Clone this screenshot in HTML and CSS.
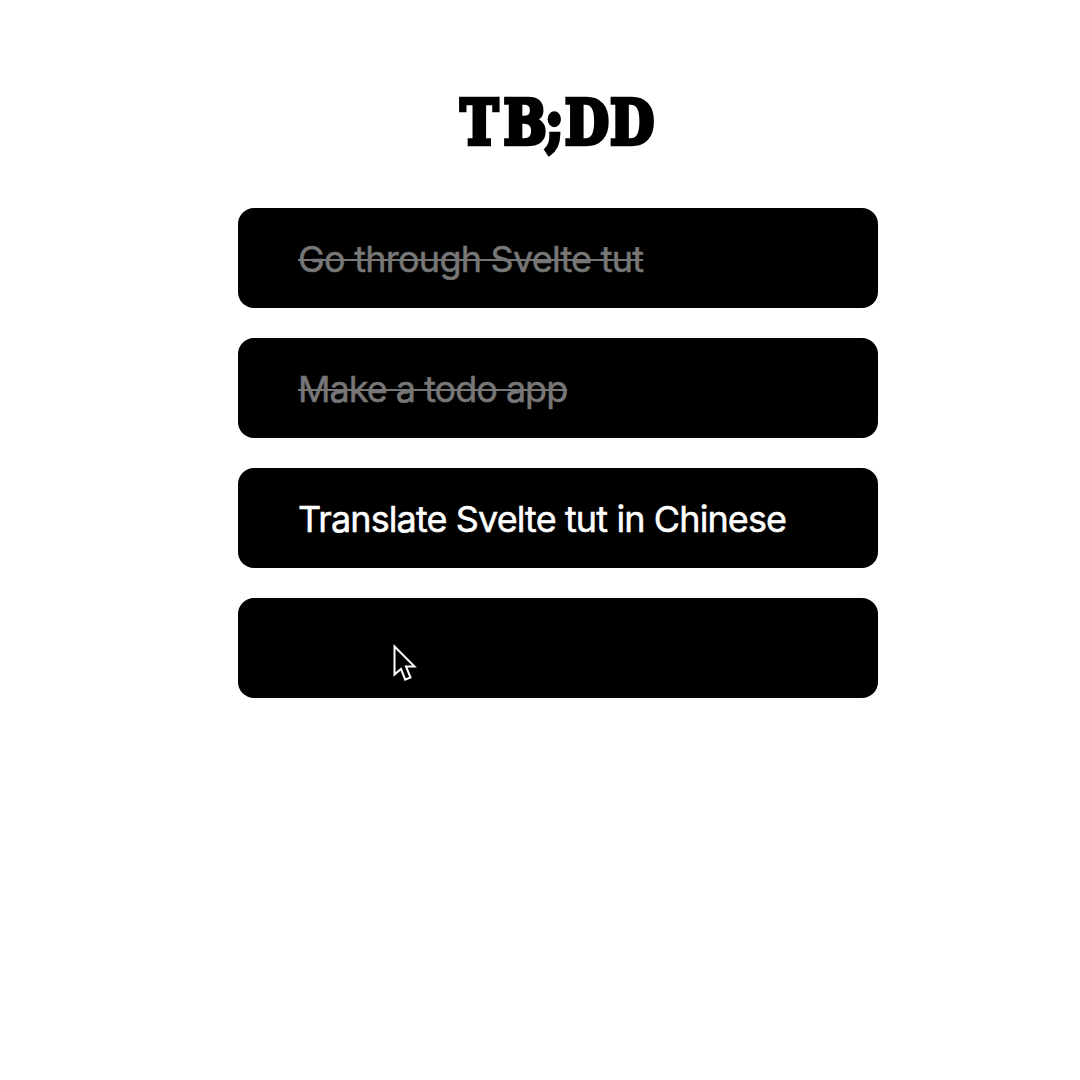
FILE: index.html
```html
<!DOCTYPE html>
<html lang="en">
<head>
<meta charset="utf-8">
<title>TB;DD</title>
<link rel="stylesheet" href="styles.css">
</head>
<body>
<main class="app">
  <h1 class="title"><span class="kern-wide">T</span><span class="kern-tight">B</span>;DD</h1>
  <ul class="todos">
    <li class="todo done"><span class="label">Go through Svelte tut</span></li>
    <li class="todo done make"><span class="label">Make a todo app</span></li>
    <li class="todo next"><span class="label">Translate Svelte tut in Chinese</span></li>
    <li class="todo"></li>
  </ul>
</main>
<svg class="cursor" width="30" height="42" viewBox="0 0 30 42"><path d="M4.5 2.5V30.5L11 25L15.2 35.7L20.5 33.5L16 22.5H24.5Z"/></svg>
</body>
</html>
```
FILE: styles.css
```css
* { box-sizing: border-box; }
body {
  margin: 0;
  min-height: 1080px;
  background: #fff;
  font-family: Inter, "Liberation Sans", sans-serif;
}
.app {
  width: 640px;
  margin-left: 238px;
  padding-top: 82px;
}
.title {
  margin: 0 0 46px;
  height: 80px;
  font: bold 61px/82px "DejaVu Serif Condensed", "DejaVu Serif", serif;
  font-stretch: condensed;
  letter-spacing: 1.5px;
  text-align: center;
  -webkit-text-stroke: 4.4px #000;
  transform: scaleX(.92);
}
.kern-wide { letter-spacing: 6px; }
.kern-tight { letter-spacing: -1.5px; }
.todos {
  display: flex;
  flex-direction: column;
  gap: 30px;
  margin: 0;
  padding: 0;
  list-style: none;
}
.todo {
  display: flex;
  align-items: center;
  height: 100px;
  padding: 2px 60px 0;
  border-radius: 16px;
  background: #000;
  color: #fff;
  font-size: 36px;
  letter-spacing: -.76px;
  white-space: nowrap;
  -webkit-text-stroke: .5px currentColor;
}
.make { letter-spacing: -1px; }
.next { letter-spacing: -.89px; }
.done .label {
  color: #777;
  text-decoration: line-through;
  text-decoration-thickness: 2px;
  text-decoration-skip-ink: none;
}
.cursor {
  position: absolute;
  left: 390px;
  top: 644px;
  fill: #000;
  stroke: #fff;
  stroke-width: 2;
}
```
